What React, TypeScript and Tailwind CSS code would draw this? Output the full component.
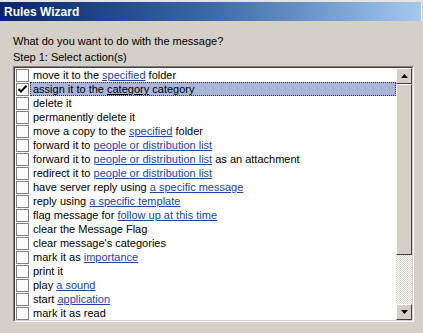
const ROWS: { parts: [string, boolean][] }[] = [
  { parts: [['move it to the ', false], ['specified', true], [' folder', false]] },
  { parts: [['assign it to the ', false], ['category', true], [' category', false]] },
  { parts: [['delete it', false]] },
  { parts: [['permanently delete it', false]] },
  { parts: [['move a copy to the ', false], ['specified', true], [' folder', false]] },
  { parts: [['forward it to ', false], ['people or distribution list', true]] },
  { parts: [['forward it to ', false], ['people or distribution list', true], [' as an attachment', false]] },
  { parts: [['redirect it to ', false], ['people or distribution list', true]] },
  { parts: [['have server reply using ', false], ['a specific message', true]] },
  { parts: [['reply using ', false], ['a specific template', true]] },
  { parts: [['flag message for ', false], ['follow up at this time', true]] },
  { parts: [['clear the Message Flag', false]] },
  { parts: [["clear message's categories", false]] },
  { parts: [['mark it as ', false], ['importance', true]] },
  { parts: [['print it', false]] },
  { parts: [['play ', false], ['a sound', true]] },
  { parts: [['start ', false], ['application', true]] },
  { parts: [['mark it as read', false]] },
];

const SELECTED = 1;

function ScrollButton({ down }: { down?: boolean }) {
  return (
    <div className="h-[16px] w-[16px] bg-[#d4d0c8] border border-t-white border-l-white border-b-[#404040] border-r-[#404040] flex items-center justify-center">
      <svg width="7" height="4" viewBox="0 0 7 4">
        {down ? <polygon points="0,0 7,0 3.5,4" fill="#000" /> : <polygon points="0,4 7,4 3.5,0" fill="#000" />}
      </svg>
    </div>
  );
}

export default function App() {
  return (
    <div className="w-[423px] h-[333px] bg-[#d4d0c8] overflow-hidden font-['Liberation_Sans',Arial,sans-serif] text-[11px] text-black">
      <div className="h-[2px] bg-[#e6e4df]" />
      <div className="h-[19px] flex items-center bg-gradient-to-r from-[#0a246a] via-[#3a6aa8] to-[#a6caf0]">
        <span className="pl-[4px] pt-[1px] text-[12px] font-bold text-white leading-none flex-1">Rules Wizard</span>
        <div className="w-[2px] h-full border-l border-white bg-[#d4d0c8]" />
      </div>
      <div className="pl-[13px] pt-[12px]">
        <div className="leading-[16px]">What do you want to do with the message?</div>
        <div className="leading-[16px]">Step 1: Select action(s)</div>
        <div className="mt-[1px] w-[401px] border border-t-[#808080] border-l-[#808080] border-b-white border-r-white">
          <div className="border border-t-[#404040] border-l-[#404040] border-b-[#d4d0c8] border-r-[#d4d0c8] bg-white flex h-[254px]">
            <div className="flex-1 flex flex-col overflow-hidden">
              {ROWS.map((row, i) => (
                <div key={i} className="h-[14px] flex items-center shrink-0">
                  <div className="ml-[1px] w-[13px] h-[13px] border border-[#808080] bg-white flex items-center justify-center shrink-0">
                    {i === SELECTED && (
                      <svg width="9" height="8" viewBox="0 0 9 8">
                        <polyline points="0.5,4 3,6.5 8.5,0.8" fill="none" stroke="#000" strokeWidth="2" />
                      </svg>
                    )}
                  </div>
                  <div
                    className={
                      i === SELECTED
                        ? 'ml-[1px] flex-1 h-[14px] pl-[2px] leading-[12px] bg-[#a9b4d8] border border-dotted border-[#333] whitespace-nowrap'
                        : 'ml-[1px] flex-1 h-[14px] pl-[3px] leading-[14px] whitespace-nowrap'
                    }
                  >
                    {row.parts.map(([t, link], j) =>
                      link ? (
                        <span key={j} className={i === SELECTED ? 'underline' : 'underline text-[#1d45a5]'}>
                          {t}
                        </span>
                      ) : (
                        <span key={j}>{t}</span>
                      )
                    )}
                  </div>
                </div>
              ))}
            </div>
            <div className="w-[16px] flex flex-col">
              <ScrollButton />
              <div className="h-[171px] bg-[#d4d0c8] border border-t-white border-l-white border-b-[#404040] border-r-[#404040]" />
              <div className="flex-1 bg-[repeating-conic-gradient(#d4d0c8_0%_25%,#ffffff_0%_50%)] bg-[length:2px_2px]" />
              <ScrollButton down />
            </div>
          </div>
        </div>
      </div>
    </div>
  );
}
